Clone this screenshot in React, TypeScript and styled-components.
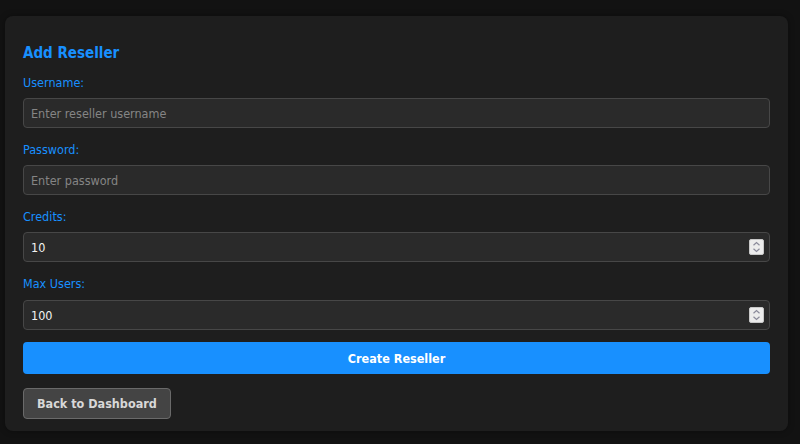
import styled, { createGlobalStyle } from 'styled-components'

const GlobalStyle = createGlobalStyle`
  html, body {
    margin: 0;
    background: #121212;
    font-family: Tahoma, "DejaVu Sans Condensed", "DejaVu Sans", sans-serif;
  }
  * { box-sizing: border-box; }
`

const Page = styled.div`
  padding: 16px 12px 12px 5px;
`

const Card = styled.section`
  background: #1e1e1e;
  border-radius: 8px;
  padding: 27px 18px 12px;
  box-shadow: 0 0 6px rgba(0, 0, 0, 0.35);
`

const Title = styled.h2`
  margin: 0 0 11px;
  color: #1890ff;
  font-size: 15px;
  font-weight: bold;
  line-height: 20px;
`

// gap + margin always add up to 20px, so each row keeps the same pitch
const Field = styled.div<{ $gap?: number }>`
  display: flex;
  flex-direction: column;
  gap: ${(p) => p.$gap ?? 7}px;
  margin-bottom: ${(p) => 20 - (p.$gap ?? 7)}px;
`

const Label = styled.label`
  color: #1890ff;
  font-size: 12.5px;
  line-height: 17px;
`

const InputWrap = styled.div`
  position: relative;
`

const Input = styled.input`
  width: 100%;
  height: 30px;
  padding: 0 7px;
  background: #2a2a2a;
  border: 1px solid #474747;
  border-radius: 4px;
  color: #f2f2f2;
  font-family: inherit;
  font-size: 12.5px;
  outline: none;

  &::placeholder { color: #858585; }
  &::-webkit-inner-spin-button,
  &::-webkit-outer-spin-button { -webkit-appearance: none; margin: 0; }
`

const Spinner = styled.span`
  position: absolute;
  right: 6px;
  top: 7px;
  width: 15px;
  height: 16px;
  background: #ececec;
  border: 1px solid #c8c8c8;
  border-radius: 2px;
  display: flex;
  align-items: center;
  justify-content: center;
`

const PrimaryButton = styled.button`
  width: 100%;
  height: 32px;
  background: #1890ff;
  border: none;
  border-radius: 4px;
  color: #fff;
  font-family: inherit;
  font-size: 12.5px;
  font-weight: bold;
  cursor: pointer;
`

const SecondaryButton = styled.button`
  margin-top: 14px;
  height: 31px;
  padding: 0 13px;
  background: #444;
  border: 1px solid #6a6a6a;
  border-radius: 4px;
  color: #d8d8d8;
  font-family: inherit;
  font-size: 12.5px;
  font-weight: bold;
  cursor: pointer;
`

const SpinIcon = () => (
  <svg width="9" height="12" viewBox="0 0 9 12" fill="none" stroke="#8a8a9a" strokeWidth="1.2">
    <path d="M1.5 4.2 L4.5 1.5 L7.5 4.2" />
    <path d="M1.5 7.8 L4.5 10.5 L7.5 7.8" />
  </svg>
)

const App = () => {
  return (
    <Page>
      <GlobalStyle />
      <Card>
        <Title>Add Reseller</Title>
        <Field>
          <Label>Username:</Label>
          <Input type="text" placeholder="Enter reseller username" />
        </Field>
        <Field>
          <Label>Password:</Label>
          <Input type="password" placeholder="Enter password" />
        </Field>
        <Field>
          <Label>Credits:</Label>
          <InputWrap>
            <Input type="number" defaultValue={10} />
            <Spinner><SpinIcon /></Spinner>
          </InputWrap>
        </Field>
        <Field $gap={8}>
          <Label>Max Users:</Label>
          <InputWrap>
            <Input type="number" defaultValue={100} />
            <Spinner><SpinIcon /></Spinner>
          </InputWrap>
        </Field>
        <PrimaryButton>Create Reseller</PrimaryButton>
        <SecondaryButton>Back to Dashboard</SecondaryButton>
      </Card>
    </Page>
  )
}

export default App
